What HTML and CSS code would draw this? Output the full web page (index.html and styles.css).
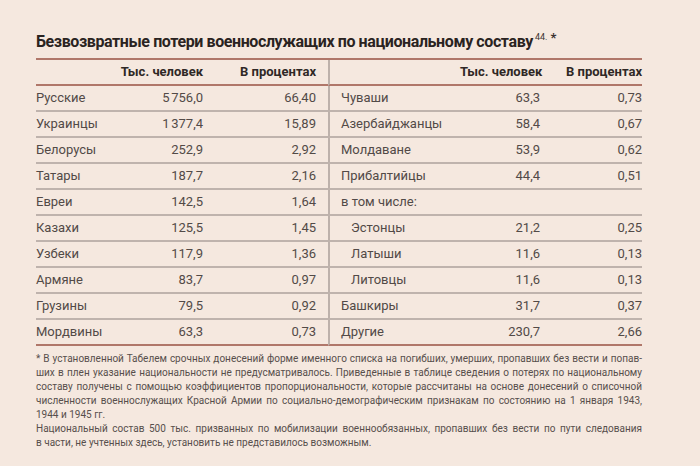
FILE: index.html
```html
<!DOCTYPE html>
<html lang="ru">
<head>
<meta charset="utf-8">
<title>Безвозвратные потери военнослужащих по национальному составу</title>
<link rel="stylesheet" href="styles.css">
</head>
<body>
<div class="page">
  <h1 class="title">Безвозвратные потери военнослужащих по национальному составу<sup class="ref">44.<b class="star">*</b></sup></h1>
  <table class="losses">
    <colgroup>
      <col class="c1"><col class="c2"><col class="c3"><col class="c4"><col class="c5"><col class="c6">
    </colgroup>
    <thead>
      <tr>
        <th class="name"></th><th class="num">Тыс. человек</th><th class="pct-l">В процентах</th>
        <th class="name-r"></th><th class="num">Тыс. человек</th><th class="pct-r">В процентах</th>
      </tr>
    </thead>
    <tbody>
      <tr><td class="name">Русские</td><td class="num">5&#8239;756,0</td><td class="pct-l">66,40</td><td class="name-r">Чуваши</td><td class="num">63,3</td><td class="pct-r">0,73</td></tr>
      <tr><td class="name">Украинцы</td><td class="num">1&#8239;377,4</td><td class="pct-l">15,89</td><td class="name-r">Азербайджанцы</td><td class="num">58,4</td><td class="pct-r">0,67</td></tr>
      <tr><td class="name">Белорусы</td><td class="num">252,9</td><td class="pct-l">2,92</td><td class="name-r">Молдаване</td><td class="num">53,9</td><td class="pct-r">0,62</td></tr>
      <tr><td class="name">Татары</td><td class="num">187,7</td><td class="pct-l">2,16</td><td class="name-r">Прибалтийцы</td><td class="num">44,4</td><td class="pct-r">0,51</td></tr>
      <tr><td class="name">Евреи</td><td class="num">142,5</td><td class="pct-l">1,64</td><td class="name-r">в том числе:</td><td class="num"></td><td class="pct-r"></td></tr>
      <tr><td class="name">Казахи</td><td class="num">125,5</td><td class="pct-l">1,45</td><td class="name-r sub">Эстонцы</td><td class="num">21,2</td><td class="pct-r">0,25</td></tr>
      <tr><td class="name">Узбеки</td><td class="num">117,9</td><td class="pct-l">1,36</td><td class="name-r sub">Латыши</td><td class="num">11,6</td><td class="pct-r">0,13</td></tr>
      <tr><td class="name">Армяне</td><td class="num">83,7</td><td class="pct-l">0,97</td><td class="name-r sub">Литовцы</td><td class="num">11,6</td><td class="pct-r">0,13</td></tr>
      <tr><td class="name">Грузины</td><td class="num">79,5</td><td class="pct-l">0,92</td><td class="name-r">Башкиры</td><td class="num">31,7</td><td class="pct-r">0,37</td></tr>
      <tr class="last"><td class="name">Мордвины</td><td class="num">63,3</td><td class="pct-l">0,73</td><td class="name-r">Другие</td><td class="num">230,7</td><td class="pct-r">2,66</td></tr>
    </tbody>
  </table>
  <div class="notes">
    <p class="note">
      <span class="line">* В установленной Табелем срочных донесений форме именного списка на погибших, умерших, пропавших без вести и попав-</span>
      <span class="line">ших в плен указание национальности не предусматривалось. Приведенные в таблице сведения о потерях по национальному</span>
      <span class="line">составу получены с помощью коэффициентов пропорциональности, которые рассчитаны на основе донесений о списочной</span>
      <span class="line">численности военнослужащих Красной Армии по социально-демографическим признакам по состоянию на 1 января 1943,</span>
      <span class="line end">1944 и 1945 гг.</span>
    </p>
    <p class="note">
      <span class="line">Национальный состав 500 тыс. призванных по мобилизации военнообязанных, пропавших без вести по пути следования</span>
      <span class="line end">в части, не учтенных здесь, установить не представилось возможным.</span>
    </p>
  </div>
</div>
</body>
</html>
```

FILE: styles.css
```css
html, body {
  margin: 0;
  background: #f5e8df;
}

.page {
  width: 606px;
  padding: 31px 0 0 36px;
  font-family: Roboto, "Noto Sans", sans-serif;
  color: #524a47;
}

.title {
  margin: 0 0 3px;
  font-size: 16px;
  line-height: 22px;
  font-weight: 700;
  letter-spacing: -0.4px;
  color: #2a2321;
  white-space: nowrap;
}

.ref {
  font-size: 9px;
  font-weight: 400;
  letter-spacing: 0;
  vertical-align: 0;
  position: relative;
  top: -7px;
  margin-left: 2px;
  color: #3a3230;
}

.star {
  font-size: 13px;
  font-weight: 700;
  margin-left: 3px;
  position: relative;
  top: 2px;
}

.losses {
  width: 606px;
  table-layout: fixed;
  border-collapse: separate;
  border-spacing: 0;
  border-top: 2px solid #b0776a;
  font-size: 13px;
}

.c1 { width: 84px; }
.c2 { width: 83px; }
.c3 { width: 125px; }
.c4 { width: 132px; }
.c5 { width: 80px; }
.c6 { width: 102px; }

.losses th,
.losses td {
  padding: 0;
  line-height: 24px;
  white-space: nowrap;
  overflow: visible;
}

.losses th {
  font-weight: 700;
  color: #2f2826;
  border-bottom: 2px solid #b0776a;
}

.losses td {
  border-bottom: 2px solid #bfb3ad;
}

.losses .last td {
  border-bottom-color: #b0776a;
}

.name {
  text-align: left;
}

.num {
  text-align: right;
}

.pct-l {
  text-align: right;
  padding-right: 12px !important;
}

.name-r {
  text-align: left;
  border-left: 2px solid #bdb1ab;
  padding-left: 11px !important;
}

.name-r.sub {
  padding-left: 21px !important;
}

.pct-r {
  text-align: right;
}

.notes {
  margin-top: 6px;
  font-size: 10px;
  line-height: 14px;
  color: #574f4c;
}

.note {
  margin: 0;
}

.line {
  display: block;
  text-align: justify;
  text-align-last: justify;
}

.line.end {
  text-align-last: left;
}
```
